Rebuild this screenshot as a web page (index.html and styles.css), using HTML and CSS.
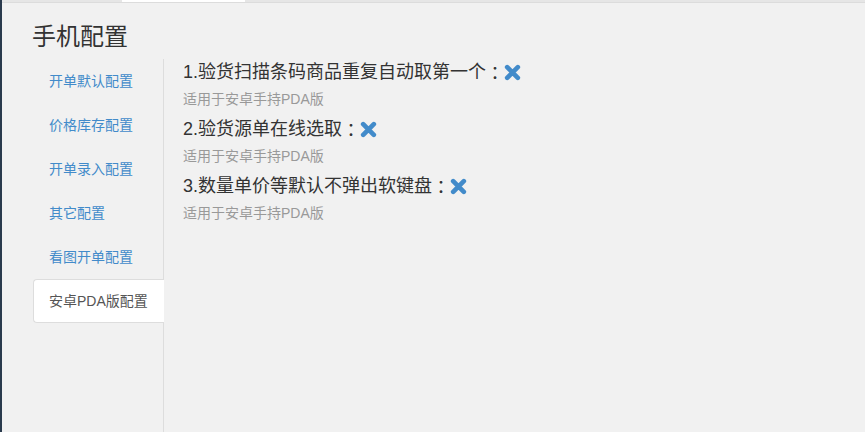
FILE: index.html
```html
<!DOCTYPE html>
<html lang="zh-CN">

<head>
    <meta charset="UTF-8">
    <meta name="viewport" content="width=device-width, initial-scale=1.0">
    <title>手机配置</title>
    <link rel="stylesheet" href="styles.css">
</head>

<body>
    <div class="top-bar">
        <div class="top-tab"></div>
    </div>

    <div class="page">
        <h3 class="page-title">手机配置</h3>

        <div class="config-box">
            <ul class="side-nav">
                <li><a href="#">开单默认配置</a></li>
                <li><a href="#">价格库存配置</a></li>
                <li><a href="#">开单录入配置</a></li>
                <li><a href="#">其它配置</a></li>
                <li><a href="#">看图开单配置</a></li>
                <li class="active"><a href="#">安卓PDA版配置</a></li>
            </ul>

            <div class="config-content">
                <div class="config-item">
                    <div class="config-label">1.验货扫描条码商品重复自动取第一个<span class="colon">：</span><svg class="icon-off" viewBox="0 0 16 16"><path d="M3 3L13 13M13 3L3 13" /></svg></div>
                    <div class="config-tip">适用于安卓手持PDA版</div>
                </div>
                <div class="config-item">
                    <div class="config-label">2.验货源单在线选取<span class="colon">：</span><svg class="icon-off" viewBox="0 0 16 16"><path d="M3 3L13 13M13 3L3 13" /></svg></div>
                    <div class="config-tip">适用于安卓手持PDA版</div>
                </div>
                <div class="config-item">
                    <div class="config-label">3.数量单价等默认不弹出软键盘<span class="colon">：</span><svg class="icon-off" viewBox="0 0 16 16"><path d="M3 3L13 13M13 3L3 13" /></svg></div>
                    <div class="config-tip">适用于安卓手持PDA版</div>
                </div>
            </div>
        </div>
    </div>
</body>

</html>
```

FILE: styles.css
```css
html,
body {
    height: 100%;
}

body {
    margin: 0;
    padding: 0;
    display: flex;
    flex-direction: column;
    background-color: #f1f1f1;
    border-left: 2px solid #2a3a4d;
    font-family: "Liberation Sans", Arial, "Noto Sans CJK SC", sans-serif;
    color: #333;
    overflow: hidden;
}

.top-bar {
    height: 2px;
    background-color: #e6e6e6;
    border-bottom: 1px solid #dcdcdc;
    display: flex;
}

.top-tab {
    width: 123px;
    margin-left: 120px;
    background-color: #fff;
}

.page {
    flex: 1;
    display: flex;
    flex-direction: column;
    padding-left: 31px;
}

.page-title {
    margin: 21px 0 9px -1px;
    font-size: 24px;
    font-weight: normal;
    line-height: 26px;
    color: #333;
}

.config-box {
    flex: 1;
    display: flex;
}

.side-nav {
    width: 130px;
    margin: 0;
    padding: 0;
    list-style: none;
    border-right: 1px solid #ddd;
}

.side-nav li a {
    display: block;
    padding: 11px 15px;
    line-height: 20px;
    font-size: 14px;
    color: #428bca;
    text-decoration: none;
    border: 1px solid transparent;
    border-right: none;
    margin-right: -1px;
    border-radius: 4px 0 0 4px;
}

.side-nav li.active a {
    background-color: #fff;
    color: #555;
    border-color: #ddd;
}

.config-content {
    padding-left: 19px;
}

.config-label {
    font-size: 18px;
    line-height: 26px;
    color: #333;
    display: flex;
    align-items: center;
}

.colon {
    font-family: "Noto Sans CJK JP", sans-serif;
}

.icon-off {
    width: 17px;
    height: 17px;
    margin-left: 0;
    fill: none;
    stroke: #428bca;
    stroke-width: 4.4;
    stroke-linecap: round;
}

.config-tip {
    margin: 5px 0 8px;
    font-size: 14px;
    line-height: 18px;
    color: #999;
}
```
